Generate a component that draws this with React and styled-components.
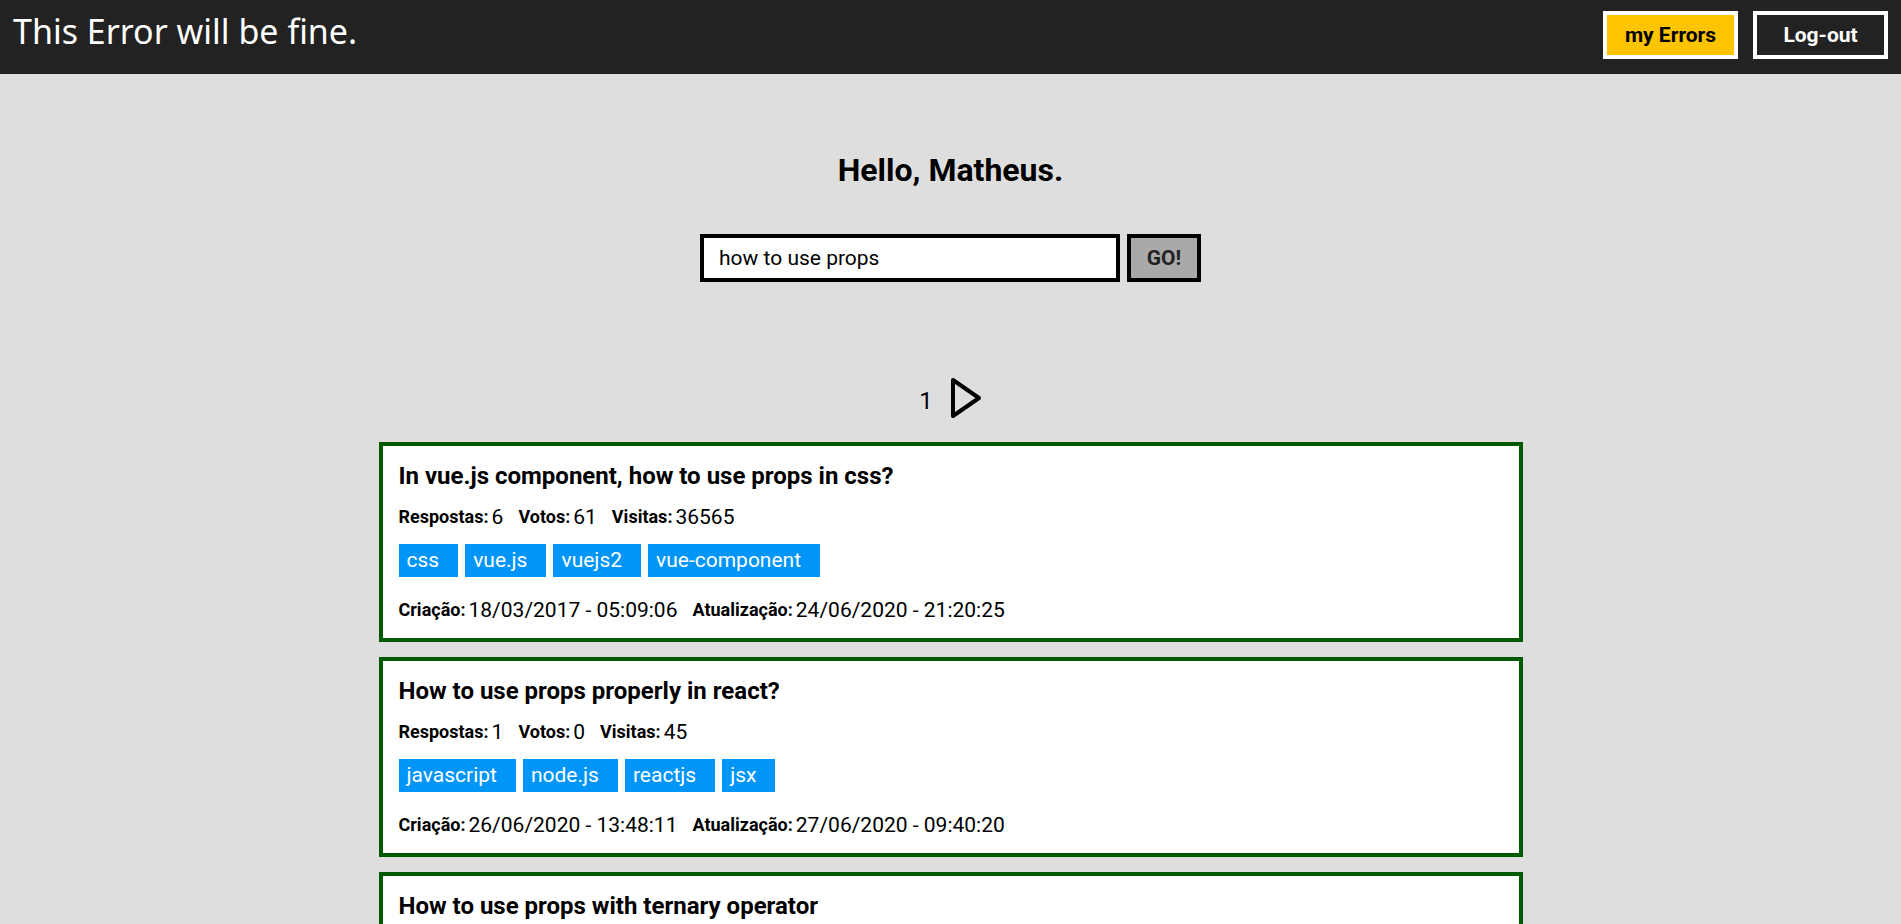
import React from "react";
import styled, { createGlobalStyle } from "styled-components";

const GlobalStyle = createGlobalStyle`
  * { box-sizing: border-box; }
  body {
    margin: 0;
    background: #dedede;
    color: #000;
    font-family: Roboto, sans-serif;
    font-size: 21px;
  }
  h1, h2, p, dl, dd, ul { margin: 0; padding: 0; }
`;

const Header = styled.header`
  display: flex;
  justify-content: space-between;
  align-items: flex-start;
  min-height: 74px;
  padding: 11px 13px 15px;
  background: #222;
`;

const Brand = styled.a`
  color: #fff;
  font-family: "Noto Sans", sans-serif;
  font-size: 34px;
  line-height: 40px;
  text-decoration: none;
`;

const Nav = styled.nav`
  display: flex;
  gap: 15px;
`;

const NavButton = styled.button`
  width: 135px;
  height: 48px;
  padding: 0;
  border: 4px solid #fff;
  background: ${(p) => (p.$highlight ? "#ffc400" : "#222")};
  color: ${(p) => (p.$highlight ? "#000" : "#fff")};
  font: bold 21px Roboto, sans-serif;
`;

const Main = styled.main`
  display: flex;
  flex-direction: column;
  align-items: center;
  padding: 76px 16px 0;
`;

const Greeting = styled.h1`
  font-size: 32px;
  line-height: 40px;
`;

const SearchForm = styled.form`
  display: flex;
  gap: 7px;
  margin-top: 44px;
`;

const SearchInput = styled.input`
  width: 420px;
  height: 48px;
  padding: 0 15px;
  border: 4px solid #000;
  border-radius: 0;
  background: #fff;
  color: #000;
  font: 21px Roboto, sans-serif;
  outline: none;
`;

const SearchButton = styled.button`
  width: 74px;
  height: 48px;
  padding: 0;
  border: 4px solid #000;
  background: #a9a9a9;
  color: #222;
  font: bold 21px Roboto, sans-serif;
`;

const Pager = styled.nav`
  display: flex;
  align-items: center;
  gap: 17px;
  margin-top: 92px;
  height: 48px;
  font-size: 24px;
`;

const PageNumber = styled.span`
  padding-top: 6px;
`;

const NextButton = styled.button`
  display: flex;
  padding: 0;
  border: 0;
  background: none;
`;

const Results = styled.section`
  display: flex;
  flex-direction: column;
  gap: 15px;
  width: 100%;
  max-width: 1144px;
  margin-top: 20px;
`;

const Card = styled.article`
  padding: 16px;
  border: 4px solid #005a00;
  background: #fff;
`;

const Title = styled.h2`
  font-size: 24px;
  line-height: 28px;
`;

const Facts = styled.dl`
  display: flex;
  flex-wrap: wrap;
  gap: 0 15px;
  line-height: 24px;
`;

const FactItem = styled.div`
  display: flex;
  gap: 3px;

  dt {
    font-size: 18px;
    font-weight: bold;
  }
  dd {
    font-size: 21px;
  }
`;

const Details = styled.div`
  margin-top: 15px;
`;

const Tags = styled.ul`
  display: flex;
  flex-wrap: wrap;
  gap: 7px;
  margin: 15px 0 21px;
  list-style: none;
`;

const Tag = styled.li`
  padding: 0 19px 0 8px;
  background: #0095f9;
  color: #fff;
  font-size: 21px;
  line-height: 33px;
`;

const questions = [
  {
    title: "In vue.js component, how to use props in css?",
    answers: 6, votes: 61, views: 36565,
    tags: ["css", "vue.js", "vuejs2", "vue-component"],
    created: "18/03/2017 - 05:09:06", updated: "24/06/2020 - 21:20:25",
  },
  {
    title: "How to use props properly in react?",
    answers: 1, votes: 0, views: 45,
    tags: ["javascript", "node.js", "reactjs", "jsx"],
    created: "26/06/2020 - 13:48:11", updated: "27/06/2020 - 09:40:20",
  },
  { title: "How to use props with ternary operator" },
];

function Fact({ label, value }) {
  return (
    <FactItem>
      <dt>{label}:</dt>
      <dd>{value}</dd>
    </FactItem>
  );
}

function Question({ data }) {
  return (
    <Card>
      <Title>{data.title}</Title>
      {data.tags && (
        <Details>
          <Facts>
            <Fact label="Respostas" value={data.answers} />
            <Fact label="Votos" value={data.votes} />
            <Fact label="Visitas" value={data.views} />
          </Facts>
          <Tags>
            {data.tags.map((tag) => <Tag key={tag}>{tag}</Tag>)}
          </Tags>
          <Facts>
            <Fact label="Criação" value={data.created} />
            <Fact label="Atualização" value={data.updated} />
          </Facts>
        </Details>
      )}
    </Card>
  );
}

export default function App() {
  return (
    <>
      <GlobalStyle />
      <Header>
        <Brand href="#">This Error will be fine.</Brand>
        <Nav>
          <NavButton type="button" $highlight>my Errors</NavButton>
          <NavButton type="button">Log-out</NavButton>
        </Nav>
      </Header>
      <Main>
        <Greeting>Hello, Matheus.</Greeting>
        <SearchForm onSubmit={(e) => e.preventDefault()}>
          <SearchInput aria-label="Search" defaultValue="how to use props" />
          <SearchButton type="submit">GO!</SearchButton>
        </SearchForm>
        <Pager aria-label="Pages">
          <PageNumber>1</PageNumber>
          <NextButton type="button" aria-label="Next page">
            <svg width="32" height="42" viewBox="0 0 32 42" fill="none" stroke="#000" strokeWidth="4" strokeLinejoin="round">
              <path d="M3 3 L29 21 L3 39 Z" />
            </svg>
          </NextButton>
        </Pager>
        <Results>
          {questions.map((q) => <Question key={q.title} data={q} />)}
        </Results>
      </Main>
    </>
  );
}
